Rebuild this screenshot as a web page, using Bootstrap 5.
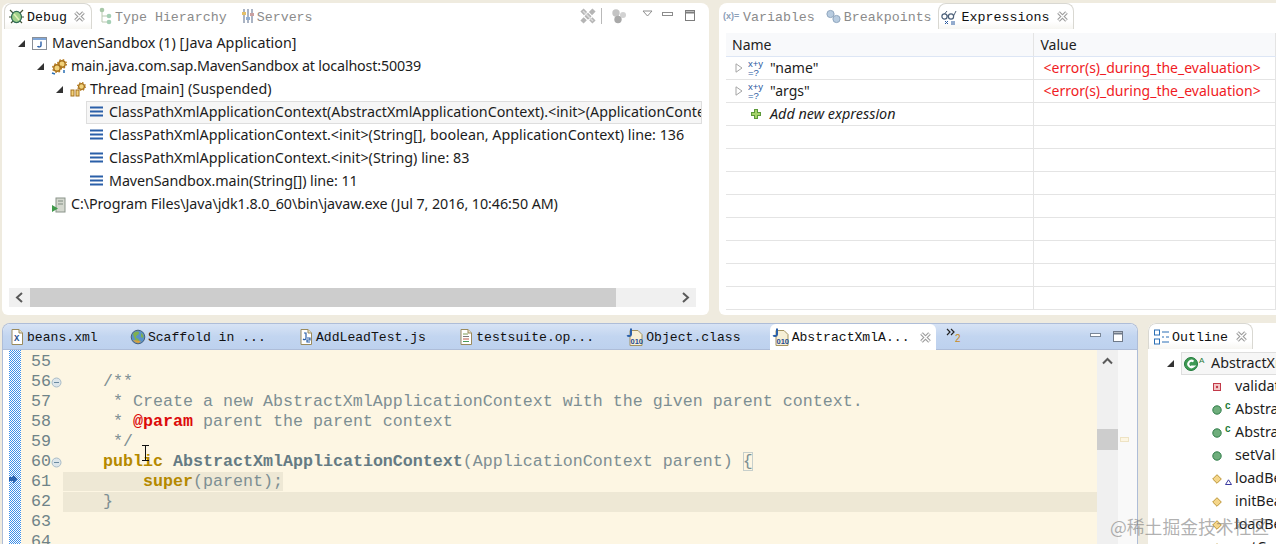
<!DOCTYPE html>
<html lang="en">
<head>
<meta charset="utf-8">
<title>Eclipse debug perspective</title>
<link rel="stylesheet" href="https://cdn.jsdelivr.net/npm/bootstrap@5.3.0/dist/css/bootstrap.min.css">
<style>
html,body{height:544px;overflow:hidden}
body{background:#efebdf;position:relative;font-family:"Noto Sans",sans-serif;font-size:14px;color:#1c1c1c;line-height:1}
.wk-row{display:flex;gap:10px;padding-left:2px}
.wk-top{height:312px;margin-top:3px}
.wk-bot{height:221px;margin-top:8px}
.pane{background:#fff;border-radius:8px 8px 6px 6px;overflow:hidden;display:flex;flex-direction:column;position:relative}
.pane-debug{width:707px}
.pane-exp{flex:1 1 0;min-width:0;border-radius:8px 0 0 6px}
.pane-ed{width:1136px;border-radius:8px 8px 0 0;border:1px solid #aebdd8;border-bottom:0}
.pane-out{flex:1 1 0;min-width:0;border-radius:8px 0 0 0}
.tabbar{height:26px;display:flex;align-items:center;flex:none;font-family:"Liberation Mono",monospace;font-size:13.3px;color:#8b8b8b;white-space:nowrap}
.tabbar span{position:relative;top:1px}
.vtab{display:flex;align-items:center;height:100%}
.vtab:not(.vtab-on) span{top:2px}
.vtab svg{flex:none;display:block}
.vtab-on{color:#111;border-radius:8px 8px 0 0;border:1px solid #d9d8d2;border-bottom:0;background:linear-gradient(#fff 70%,#f7f6f2)}
.dbg-on{margin-left:2px;width:88px;padding-left:3px}
.dbg-on .ic16{margin-right:2px}
.dbg-on .clx{margin-left:6px}
.dbg-t2{margin-left:7px}.dbg-t2 .ic16{margin-right:1px}
.dbg-t3{margin-left:13px}.dbg-t3 .ic16{margin-right:1px}
.exp-t1{margin-left:4px}.exp-t1 .ic16{margin-right:3px;width:17px}
.exp-t2{margin-left:11px}.exp-t2 .ic16{margin-right:3px}
.exp-on{margin-left:6px;width:136px;padding-left:2px}
.exp-on .ic16{margin-right:5px}
.exp-on .clx{margin-left:7px}
.out-on{margin-left:0;width:105px;padding-left:5px}
.out-on .ic16{margin-right:3px}
.out-on .clx{margin-left:7px}
.wintools{margin-left:auto;display:flex;align-items:center;padding-right:13px;height:100%}
.sp4{margin-left:4px}.sp9{margin-left:9px}.sp10{margin-left:10px}.sp15{margin-left:15px}
.etabs{background:linear-gradient(#d7e3f5,#c2d5f0 50%,#bdd1ee);border-bottom:1px solid #aebdd8;color:#111;height:26px;font-size:13.1px}
.etab{padding:0 16.1px;display:flex;align-items:center;height:100%}
.etab svg{flex:none;margin-right:2px}
.etab-first{padding-left:6px}
.etab-on{background:#fff;padding:0 6px 0 2px;margin-left:13px;border-radius:6px 6px 0 0;height:26px;width:166px;margin-top:1px}
.etab-on .clx{margin-left:9px}
.etab-more{margin-left:9px;align-self:flex-start;margin-top:3px}
.wintools2{margin-left:auto;display:flex;align-items:center;padding-right:13px;height:100%}
.tree{padding-top:3px;flex:1 1 0;min-height:0;font-size:14.3px}
.tr{display:flex;align-items:center;height:23px;white-space:nowrap;overflow:hidden}
.tr svg{flex:none}
.tw{width:7px;height:7px;margin-right:7px}
.lv1{padding-left:16px}
.lv2{padding-left:35px}
.lv3{padding-left:54px}
.lv4{padding-left:3px;margin-left:84px}
.lv2b{padding-left:49px}
.tr .ti{margin-right:5px}
.tr .ti16{margin-right:4px}
.tr-sel{background:#f6f6f6;outline:1px solid #dedede;outline-offset:-1px;margin-right:7px}
.tight-a{letter-spacing:-.16px}
.tight-b{letter-spacing:-.07px}
.hbar{height:19px;margin:0 13px 8px 7px;background:#f0f0f0;display:flex;align-items:center;flex:none}
.hbar-th{height:100%;background:#cdcdcd;width:586px}
.hbar-ar{width:21px;display:flex;justify-content:center;flex:none}
.hbar-end{margin-left:auto;width:21px}
.xtbl{margin:4px 0 0 7px;width:calc(100% - 7px);table-layout:fixed;border-collapse:collapse}
.table.xtbl>:not(caption)>*>*{padding:1px 0 0 7px;height:23px;border-bottom:1px solid #e4e4e4;border-right:1px solid #e4e4e4;color:#1c1c1c;vertical-align:middle;white-space:nowrap;background:none;box-shadow:none}
.table.xtbl>thead>tr>th{font-weight:400;background:#f8f9fb;border-bottom-color:#dde6f5;color:#222}
.table.xtbl>thead>tr>.c1{width:307px;padding-left:6px}
.table.xtbl>tbody>tr>.xcell{padding-left:9px}
.xc{display:flex;align-items:center}
.xc svg{flex:none}
.xc .tw2{margin-right:5px}
.xc .xi{margin-right:6px}
.table.xtbl>tbody>tr>.xerr{color:#f01b24;padding-left:10px}
.xadd{font-style:italic;font-size:14.4px}
.edbody{flex:1 1 0;min-height:0;display:flex;background:#fdf6e3;padding-top:2px;position:relative}
.strip{width:6px;background:#fff;flex:none;margin-top:-2px}
.ruler{width:12px;flex:none;margin-top:-2px;background:repeating-conic-gradient(#3d8fe8 0 25%,#fff 0 50%) 0 0/2px 2px;position:relative}
.ruler-ar{position:absolute;left:0;top:124px}
.codecol{flex:1 1 0;min-width:0;font-family:"Liberation Mono",monospace;font-size:16.67px;color:#7d8f93}
.ln{display:flex;height:20px;line-height:20px}
.no{width:30px;padding-left:10px;color:#6f8388;flex:none}
.fd{width:12px;flex:none;display:flex;align-items:center}
.src{flex:1 1 0;min-width:0;white-space:pre}
.hl-cur{background:#eee8d5}
.hl-txt{background:#eee8d5}
.kw{color:#b58900;font-weight:700}
.jt{color:#dc0a0a;font-weight:700}
.cls{color:#657b83;font-weight:700}
.brk{outline:1px solid #c7cfcb;outline-offset:-1px}
.vbar{width:21px;flex:none;background:#f0f0f0;margin-top:-2px;position:relative;display:flex;flex-direction:column;align-items:center;padding-top:7px}
.vbar-th{width:100%;height:21px;background:#cdcdcd;margin-top:64px}
.ovr{width:19px;flex:none;background:#f9f9f9;margin-top:-2px;padding:87px 0 0 2px}
.ovr-m{width:9px;height:5px;border:1px solid #eee3c4;background:#fdf6e3}
.ol{padding-left:64px}
.oi{margin-right:3px}
.oslot{width:10px;flex:none;display:flex;align-items:flex-start;height:15px;color:#1f7a3a;font:700 10px/8px "Liberation Sans",sans-serif}
.osel{display:flex;align-items:center;height:23px;flex:1 1 0;background:#f6f6f6;outline:1px solid #dedede;outline-offset:-1px;padding-left:3px}
.lv1o{padding-left:19px}
.lv1o .tw{margin-right:7px}
.wm{position:absolute;left:1110px;top:516px;font-family:"Noto Sans CJK SC","Noto Sans",sans-serif;font-size:17.8px;line-height:1.15;color:rgba(110,110,110,.55);white-space:nowrap}
.ibeam{position:absolute;left:141px;top:445px}
</style>
</head>
<body>
<svg width="0" height="0" class="position-absolute">
<defs>
<symbol id="clx" viewBox="0 0 13 13"><path d="M2.5 2.5l8 8M10.5 2.5l-8 8" stroke="#9b9b9b" stroke-width="3.6" fill="none"/><path d="M2.5 2.5l8 8M10.5 2.5l-8 8" stroke="#fff" stroke-width="1.4" fill="none"/></symbol>
<symbol id="frame" viewBox="0 0 15 15"><path d="M1 2.5h13M1 6.5h13M1 10.5h13" stroke="#2a5fa8" stroke-width="2" fill="none"/></symbol>
<symbol id="twe" viewBox="0 0 7 7"><path d="M7 0v7H0z" fill="#333"/></symbol>
<symbol id="twc" viewBox="0 0 8 10"><path d="M1 .8L7 5 1 9.2z" fill="#fff" stroke="#a5a5a5"/></symbol>
<symbol id="gear" viewBox="0 0 10 10"><circle cx="5" cy="5" r="3.2" fill="#f2d27a" stroke="#a5701c" stroke-width="1.4"/><circle cx="5" cy="5" r="4.3" fill="none" stroke="#b67a1d" stroke-width="1.4" stroke-dasharray="1.6 1.8"/></symbol>
<symbol id="xy" viewBox="0 0 16 16"><text x="0" y="7" font-family="Liberation Sans,sans-serif" font-size="9.5" fill="#2b5a9f">x+y</text><text x="0" y="15.5" font-family="Liberation Sans,sans-serif" font-size="9.5" fill="#2b5a9f">=?</text></symbol>
<symbol id="page" viewBox="0 0 16 16"><path d="M3 .5h7l3.5 3.5v11.5H3z" fill="#fff" stroke="#9a8a5c"/><path d="M10 .5V4h3.5" fill="#efe6c8" stroke="#9a8a5c"/></symbol>
<symbol id="cf" viewBox="0 0 18 18"><path d="M4 2.5h8l4 4v11H4z" fill="#f6efd6" stroke="#a3925f"/><path d="M5 .5v6c0 2-3 2-3.5.6" fill="none" stroke="#2a5fa8" stroke-width="2"/><text x="4.5" y="15.5" font-family="Liberation Sans,sans-serif" font-weight="700" font-size="7.5" fill="#1f4d92">010</text></symbol>
<symbol id="gc" viewBox="0 0 10 10"><circle cx="5" cy="5" r="4.2" fill="#6fae7c" stroke="#2f7d49"/></symbol>
<symbol id="dm" viewBox="0 0 10 10"><path d="M5 .7L9.3 5 5 9.3.7 5z" fill="#f5d68a" stroke="#bb9536"/></symbol>
<symbol id="foldm" viewBox="0 0 11 11"><circle cx="5.5" cy="5.5" r="4.5" fill="#dde6ea" stroke="#a8bac6"/><path d="M3 5.5h5" stroke="#6b8aa0"/></symbol>
</defs>
</svg>

<div class="wk-row wk-top">
  <section class="pane pane-debug">
    <div class="tabbar">
      <div class="vtab vtab-on dbg-on">
        <svg class="ic16" width="17" height="17" viewBox="0 0 17 17"><path d="M2 2l4 4M15 2l-4 4M1 9h4M16 9h-4M3 15l3-3M14 15l-3-3" stroke="#45563a" stroke-width="1.2"/><ellipse cx="8.5" cy="9" rx="5" ry="5.6" fill="#9fd08a" stroke="#2f6b55" stroke-width="1.2"/><path d="M6 6l5 6" stroke="#e2f2b8" stroke-width="1.5"/></svg>
        <span>Debug</span>
        <svg class="clx" width="13" height="13"><use href="#clx"/></svg>
      </div>
      <div class="vtab dbg-t2">
        <svg class="ic16" width="15" height="18" viewBox="0 0 15 18"><path d="M3 3v12h6M3 9h6" stroke="#b8c8b0" fill="none"/><circle cx="3" cy="3" r="2.3" fill="#a8c8a8"/><circle cx="10" cy="9" r="2.3" fill="#a5cfb5"/><circle cx="10" cy="15" r="2.3" fill="#a5cfb5"/></svg>
        <span>Type Hierarchy</span>
      </div>
      <div class="vtab dbg-t3">
        <svg class="ic16" width="16" height="16" viewBox="0 0 16 16"><path d="M4 1v14M8 1v14M12 1v14" stroke="#aab4c4" stroke-width="2"/><rect x="2" y="4" width="4" height="3" fill="#e4c06a"/><rect x="6" y="9" width="4" height="3" fill="#92b0d4"/><rect x="10" y="5" width="4" height="3" fill="#c9a0a0"/></svg>
        <span>Servers</span>
      </div>
      <div class="wintools">
        <svg width="18" height="18" viewBox="0 0 18 18"><path d="M3 3l12 12M15 3L3 15" stroke="#b5b5b5" stroke-width="4.5" stroke-dasharray="5 1.2"/><path d="M4 4l10 10" stroke="#dcdcdc" stroke-width="1.5"/></svg>
        <svg class="sp4" width="1" height="16"><path d="M.5 0v16" stroke="#b9b9b9"/></svg>
        <svg class="sp9" width="16" height="16" viewBox="0 0 16 16"><circle cx="5" cy="5" r="3.7" fill="#c4c4c4"/><circle cx="12" cy="7" r="3" fill="#d2d2d2"/><circle cx="7" cy="11.5" r="3.7" fill="#a9a9a9"/></svg>
        <svg class="sp15" width="11" height="16" viewBox="0 0 11 16"><path d="M1 3h9L5.5 8z" fill="#fff" stroke="#8e8e8e"/></svg>
        <svg class="sp9" width="12" height="14" viewBox="0 0 12 14"><rect x=".5" y="3.5" width="10" height="3" fill="#fff" stroke="#8c8c8c"/></svg>
        <svg class="sp10" width="12" height="14" viewBox="0 0 12 14"><rect x="1.5" y="1.5" width="9" height="10" fill="#fff" stroke="#7d7d7d"/><path d="M1.5 3.5h9" stroke="#7d7d7d" stroke-width="2"/></svg>
      </div>
    </div>
    <div class="tree">
      <div class="tr lv1">
        <svg class="tw" width="7" height="7"><use href="#twe"/></svg>
        <svg class="ti" width="15" height="15" viewBox="0 0 15 15"><rect x=".5" y="1.5" width="14" height="12" fill="#fff" stroke="#8a8f96"/><rect x="1" y="2" width="13" height="2" fill="#7fa6d8"/><path d="M9 5.5v4c0 1.8-3 1.8-3.4.5" fill="none" stroke="#2a5fa8" stroke-width="1.4"/></svg>
        <span>MavenSandbox (1) [Java Application]</span>
      </div>
      <div class="tr lv2">
        <svg class="tw" width="7" height="7"><use href="#twe"/></svg>
        <svg class="ti16" width="16" height="16" viewBox="0 0 16 16"><use href="#gear" x="6" y="0" width="10" height="10"/><use href="#gear" x="1" y="4" width="10" height="10"/><path d="M1 14l3 1M13 11v3" stroke="#2a6fb5" stroke-width="1.5"/></svg>
        <span class="tight-a">main.java.com.sap.MavenSandbox at localhost:50039</span>
      </div>
      <div class="tr lv3">
        <svg class="tw" width="7" height="7"><use href="#twe"/></svg>
        <svg class="ti16" width="16" height="16" viewBox="0 0 16 16"><use href="#gear" x="7" y="0" width="9" height="9"/><rect x="1" y="8" width="3" height="6" fill="#f2d27a" stroke="#a5701c"/><rect x="6" y="8" width="3" height="6" fill="#f2d27a" stroke="#a5701c"/></svg>
        <span>Thread [main] (Suspended)</span>
      </div>
      <div class="tr lv4 tr-sel">
        <svg class="ti" width="15" height="15"><use href="#frame"/></svg>
        <span>ClassPathXmlApplicationContext(AbstractXmlApplicationContext).&lt;init&gt;(ApplicationContext) line: 136</span>
      </div>
      <div class="tr lv4">
        <svg class="ti" width="15" height="15"><use href="#frame"/></svg>
        <span>ClassPathXmlApplicationContext.&lt;init&gt;(String[], boolean, ApplicationContext) line: 136</span>
      </div>
      <div class="tr lv4">
        <svg class="ti" width="15" height="15"><use href="#frame"/></svg>
        <span>ClassPathXmlApplicationContext.&lt;init&gt;(String) line: 83</span>
      </div>
      <div class="tr lv4">
        <svg class="ti" width="15" height="15"><use href="#frame"/></svg>
        <span class="tight-b">MavenSandbox.main(String[]) line: 11</span>
      </div>
      <div class="tr lv2b">
        <svg class="ti" width="15" height="16" viewBox="0 0 15 16"><rect x="5" y="1" width="9" height="14" fill="#d4d8cf" stroke="#8a948a"/><path d="M7 4h5M7 7h5" stroke="#7f8b80"/><path d="M1 8l6 3.5L1 15z" fill="#3f9a4a"/></svg>
        <span class="tight-b">C:\Program Files\Java\jdk1.8.0_60\bin\javaw.exe (Jul 7, 2016, 10:46:50 AM)</span>
      </div>
    </div>
    <div class="hbar">
      <div class="hbar-ar"><svg width="21" height="19" viewBox="0 0 21 19"><path d="M13 5l-5 4.5 5 4.5" fill="none" stroke="#5a5a5a" stroke-width="2"/></svg></div>
      <div class="hbar-th"></div>
      <div class="hbar-ar hbar-end"><svg width="21" height="19" viewBox="0 0 21 19"><path d="M8 5l5 4.5-5 4.5" fill="none" stroke="#5a5a5a" stroke-width="2"/></svg></div>
    </div>
  </section>

  <section class="pane pane-exp">
    <div class="tabbar">
      <div class="vtab exp-t1">
        <svg class="ic16" width="17" height="14" viewBox="0 0 17 14"><text x="0" y="10" font-family="Liberation Sans,sans-serif" font-size="9" font-weight="700" fill="#8ca0b8">(x)=</text></svg>
        <span>Variables</span>
      </div>
      <div class="vtab exp-t2">
        <svg class="ic16" width="15" height="15" viewBox="0 0 15 15"><circle cx="4.5" cy="5" r="3.6" fill="#b8cce0" stroke="#8fa5bd"/><circle cx="10.5" cy="10" r="3.6" fill="#b8cce0" stroke="#8fa5bd"/></svg>
        <span>Breakpoints</span>
      </div>
      <div class="vtab vtab-on exp-on">
        <svg class="ic16" width="16" height="16" viewBox="0 0 16 16"><circle cx="3.5" cy="7.5" r="2.6" fill="none" stroke="#4b5f78" stroke-width="1.2"/><circle cx="10" cy="7.5" r="2.6" fill="none" stroke="#4b5f78" stroke-width="1.2"/><path d="M6 7h1.5M12.5 7L15 2M3.5 5L6 2" stroke="#4b5f78" fill="none"/><path d="M4 12l3 3M7 12l-3 3M10 13h4M10 15h4" stroke="#2b5a9f"/></svg>
        <span>Expressions</span>
        <svg class="clx" width="13" height="13"><use href="#clx"/></svg>
      </div>
    </div>
    <table class="table xtbl mb-0">
      <thead><tr><th class="c1">Name</th><th>Value</th></tr></thead>
      <tbody>
        <tr><td class="xcell"><div class="xc"><svg class="tw2" width="8" height="10"><use href="#twc"/></svg><svg class="xi" width="16" height="16"><use href="#xy"/></svg><span>"name"</span></div></td><td class="xerr">&lt;error(s)_during_the_evaluation&gt;</td></tr>
        <tr><td class="xcell"><div class="xc"><svg class="tw2" width="8" height="10"><use href="#twc"/></svg><svg class="xi" width="16" height="16"><use href="#xy"/></svg><span>"args"</span></div></td><td class="xerr">&lt;error(s)_during_the_evaluation&gt;</td></tr>
        <tr><td class="xcell xadd"><div class="xc"><svg class="tw2" width="8" height="10"></svg><svg class="xi" width="16" height="16" viewBox="0 0 16 16"><path d="M8 3v10M3 8h10" stroke="#5d9a3a" stroke-width="4"/><path d="M8 4v8M4 8h8" stroke="#a6d36b" stroke-width="2"/></svg><span>Add new expression</span></div></td><td></td></tr>
        <tr><td></td><td></td></tr><tr><td></td><td></td></tr><tr><td></td><td></td></tr><tr><td></td><td></td></tr>
        <tr><td></td><td></td></tr><tr><td></td><td></td></tr><tr><td></td><td></td></tr><tr><td></td><td></td></tr>
      </tbody>
    </table>
  </section>
</div>

<div class="wk-row wk-bot">
  <section class="pane pane-ed">
    <div class="tabbar etabs">
      <div class="etab etab-first"><svg width="16" height="16"><use href="#page"/><text x="5" y="12" font-family="Liberation Mono,monospace" font-size="9" font-weight="700" fill="#2b4f8c">X</text></svg><span>beans.xml</span></div>
      <div class="etab"><svg width="16" height="16" viewBox="0 0 16 16"><circle cx="8" cy="8" r="6.8" fill="#5a92c8" stroke="#46607a"/><path d="M3 5c2-3 6-3 6-1s-3 2-3 4 3 1 3 3-2 3-3 2M11 4c2 1 3 3 2 5l-2-1z" fill="#7fb04e"/><path d="M3 11a7 7 0 0 0 6 3l2-2z" fill="#d9a040"/></svg><span>Scaffold in ...</span></div>
      <div class="etab"><svg width="16" height="16"><use href="#page"/><path d="M6 4h2v5c0 2-2 2-3 1M9 9h3v2H9v2h3" fill="none" stroke="#2a5fa8" stroke-width="1.2"/></svg><span>AddLeadTest.js</span></div>
      <div class="etab"><svg width="16" height="16"><use href="#page"/><path d="M5 5h5" stroke="#7a9a55"/><path d="M5 7.5h6" stroke="#7a7a7a"/><path d="M5 10h6" stroke="#c05b4a"/><path d="M5 12.5h6" stroke="#4a9a5a"/></svg><span>testsuite.op...</span></div>
      <div class="etab"><svg width="18" height="18"><use href="#cf"/></svg><span>Object.class</span></div>
      <div class="etab etab-on"><svg width="18" height="18"><use href="#cf"/></svg><span>AbstractXmlA...</span><svg class="clx" width="13" height="13"><use href="#clx"/></svg></div>
      <div class="etab-more"><svg width="18" height="18" viewBox="0 0 18 18"><path d="M2 2l3 3-3 3M6 2l3 3-3 3" fill="none" stroke="#222" stroke-width="1.2"/><text x="10" y="15" font-family="Liberation Sans,sans-serif" font-size="10" fill="#c98a1a">2</text></svg></div>
      <div class="wintools2">
        <svg width="12" height="14" viewBox="0 0 12 14"><rect x=".5" y="3.5" width="10" height="3" fill="#fff" stroke="#7b8798"/></svg>
        <svg class="sp10" width="12" height="14" viewBox="0 0 12 14"><rect x="1.5" y="1.5" width="9" height="10" fill="#fff" stroke="#6f7a8a"/><path d="M1.5 3.5h9" stroke="#6f7a8a" stroke-width="2"/></svg>
      </div>
    </div>
    <div class="edbody">
      <div class="strip"></div>
      <div class="ruler"><svg class="ruler-ar" width="9" height="10" viewBox="0 0 9 10"><path d="M0 3h4V.5L8.5 5 4 9.5V7H0z" fill="#2b63b0"/></svg></div>
      <div class="codecol">
        <div class="ln"><span class="no">55</span><span class="fd"></span><span class="src"></span></div>
        <div class="ln"><span class="no">56</span><span class="fd"><svg width="11" height="11"><use href="#foldm"/></svg></span><span class="src">    /**</span></div>
        <div class="ln"><span class="no">57</span><span class="fd"></span><span class="src">     * Create a new AbstractXmlApplicationContext with the given parent context.</span></div>
        <div class="ln"><span class="no">58</span><span class="fd"></span><span class="src">     * <span class="jt">@param</span> parent the parent context</span></div>
        <div class="ln"><span class="no">59</span><span class="fd"></span><span class="src">     */</span></div>
        <div class="ln"><span class="no">60</span><span class="fd"><svg width="11" height="11"><use href="#foldm"/></svg></span><span class="src">    <span class="kw">public</span> <span class="cls">AbstractXmlApplicationContext</span>(ApplicationContext parent) <span class="brk">{</span></span></div>
        <div class="ln"><span class="no">61</span><span class="fd"></span><span class="src"><span class="hl-txt">        <span class="kw">super</span>(parent);</span></span></div>
        <div class="ln"><span class="no">62</span><span class="fd"></span><span class="src hl-cur">    }</span></div>
        <div class="ln"><span class="no">63</span><span class="fd"></span><span class="src"></span></div>
        <div class="ln"><span class="no">64</span><span class="fd"></span><span class="src"></span></div>
      </div>
      <div class="vbar">
        <svg width="13" height="8" viewBox="0 0 13 8"><path d="M2 6.5L6.5 2 11 6.5" fill="none" stroke="#5a5a5a" stroke-width="2"/></svg>
        <div class="vbar-th"></div>
      </div>
      <div class="ovr"><div class="ovr-m"></div></div>
    </div>
  </section>

  <section class="pane pane-out">
    <div class="tabbar">
      <div class="vtab vtab-on out-on">
        <svg class="ic16" width="15" height="16" viewBox="0 0 15 16"><rect x=".5" y="1" width="5" height="5" fill="#fff" stroke="#2a6fb5"/><rect x=".5" y="10" width="5" height="5" fill="#fff" stroke="#2a6fb5"/><path d="M8 3h7M8 8h2M12 8h3M8 13h7" stroke="#2a6fb5"/></svg>
        <span>Outline</span>
        <svg class="clx" width="13" height="13"><use href="#clx"/></svg>
      </div>
    </div>
    <div class="tree">
      <div class="tr lv1o">
        <svg class="tw" width="7" height="7"><use href="#twe"/></svg>
        <span class="osel">
          <svg width="27" height="18" viewBox="0 0 27 18"><circle cx="7" cy="9" r="6.5" fill="#3f9a54" stroke="#1f7a3a"/><path d="M9.5 6.5a3.2 3.2 0 1 0 0 5H7" fill="none" stroke="#fff" stroke-width="2"/><text x="15" y="8" font-family="Liberation Sans,sans-serif" font-size="8" fill="#1f7a3a">A</text></svg>
          <span>AbstractXmlApplicationContext</span>
        </span>
      </div>
      <div class="tr ol"><svg class="oi" width="10" height="10" viewBox="0 0 10 10"><rect x="1.5" y="1.5" width="7" height="7" fill="#f4c8c8" stroke="#c23a4a"/><circle cx="5" cy="5" r="1.2" fill="#c23a4a"/></svg><span class="oslot"></span><span>validateConfigLocations</span></div>
      <div class="tr ol"><svg class="oi" width="10" height="10"><use href="#gc"/></svg><span class="oslot">c</span><span>AbstractXmlApplicationContext</span></div>
      <div class="tr ol"><svg class="oi" width="10" height="10"><use href="#gc"/></svg><span class="oslot">c</span><span>AbstractXmlApplicationContext</span></div>
      <div class="tr ol"><svg class="oi" width="10" height="10"><use href="#gc"/></svg><span class="oslot"></span><span>setValidating</span></div>
      <div class="tr ol"><svg class="oi" width="10" height="10"><use href="#dm"/></svg><span class="oslot"><svg class="mt-2" width="7" height="6" viewBox="0 0 7 6"><path d="M3.5 .8L6.5 5.5H.5z" fill="#fff" stroke="#3a3aa0"/></svg></span><span>loadBeanDefinitions</span></div>
      <div class="tr ol"><svg class="oi" width="10" height="10"><use href="#dm"/></svg><span class="oslot"></span><span>initBeanDefinitionReader</span></div>
      <div class="tr ol"><svg class="oi" width="10" height="10"><use href="#dm"/></svg><span class="oslot"></span><span>loadBeanDefinitions</span></div>
      <div class="tr ol"><svg class="oi" width="10" height="10"><use href="#dm"/></svg><span class="oslot"></span><span>getConfigResources</span></div>
    </div>
  </section>
</div>

<svg class="ibeam" width="9" height="16" viewBox="0 0 9 16"><path d="M1 .5h7M1 15.5h7M4.5 .5v15" stroke="#111" fill="none"/></svg>
<div class="wm">@稀土掘金技术社区</div>
</body>
</html>
